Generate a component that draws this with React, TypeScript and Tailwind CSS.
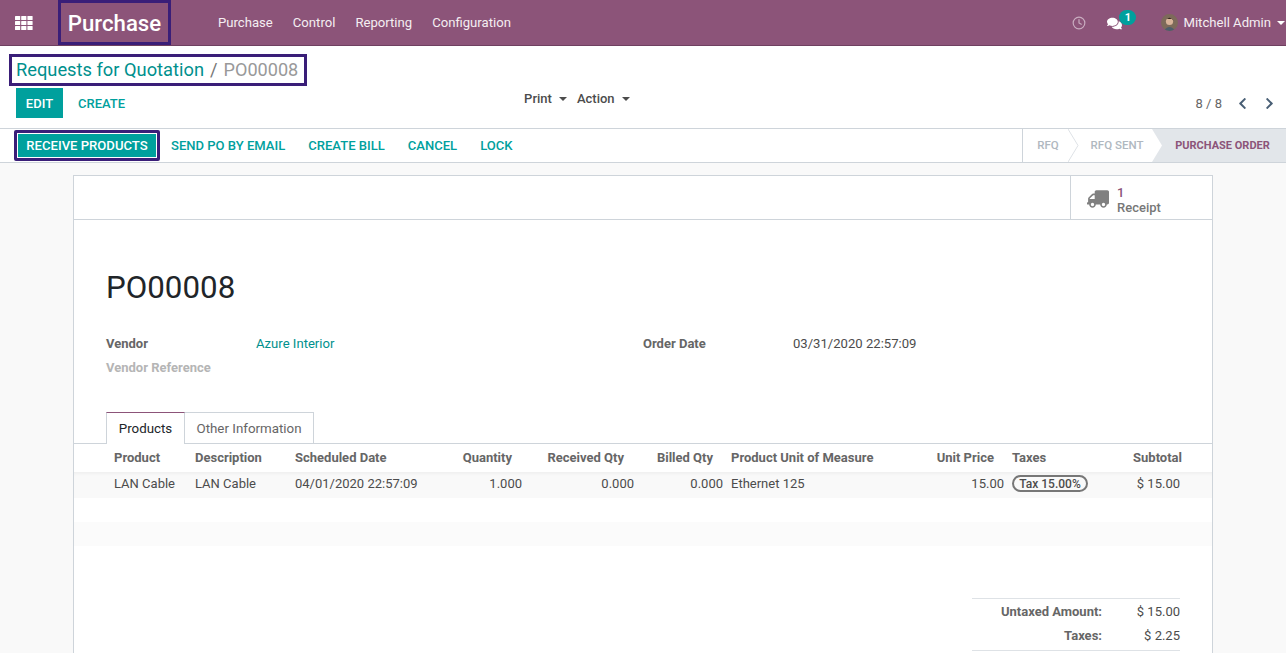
import { FaChevronLeft, FaChevronRight, FaComments, FaTruck } from "react-icons/fa";
import { Clock } from "lucide-react";

const headerCell = "font-bold text-[#666666] text-[13px] leading-none";
const bodyCell = "text-[#4c4c4c] text-[13px] leading-none pb-[4px]";

const MenuItems = ["Purchase", "Control", "Reporting", "Configuration"];
const ActionButtons = ["SEND PO BY EMAIL", "CREATE BILL", "CANCEL", "LOCK"];

const Caret = ({ color = "border-t-[#4c4c4c]", gap = "ml-[7px]" }: { color?: string; gap?: string }) => (
  <span className={`inline-block w-0 h-0 border-x-[4px] border-x-transparent border-t-[4px] align-middle ${gap} ${color}`} />
);

const AppsIcon = () => (
  <svg width="18" height="14" viewBox="0 0 18 14" fill="#fff">
    {[0, 5, 10].map((y) =>
      [0, 6.2, 12.4].map((x) => <rect key={`${x}-${y}`} x={x} y={y} width="5.2" height="4" rx="0.6" />)
    )}
  </svg>
);

const Avatar = () => (
  <svg width="17" height="17" viewBox="0 0 17 17" className="rounded-full">
    <rect width="17" height="17" fill="#7d6a5a" />
    <circle cx="8.5" cy="7.5" r="3.6" fill="#d9b49a" />
    <path d="M4.5 6.5 Q8.5 1 12.5 6.5 L11.5 5 L6 5Z" fill="#33241d" />
    <path d="M2.5 17 Q8.5 9 14.5 17Z" fill="#4d5d6b" />
  </svg>
);

const Navbar = () => (
  <div className="h-[46px] bg-[#8c5479] border-b border-[#6f4060] flex items-center text-white shrink-0">
    <div className="w-[58px] pl-[15px] flex items-center">
      <AppsIcon />
    </div>
    <div className="w-[113px] h-[45px] border-[3px] border-[#3a1e78] flex items-center justify-center text-[22.2px] font-medium leading-none pt-[1px]">
      Purchase
    </div>
    <div className="flex gap-5 ml-[47px] text-[13.13px] pt-[1px]">
      {MenuItems.map((m) => (
        <span key={m} className="text-[#f4eef2]">{m}</span>
      ))}
    </div>
    <div className="ml-auto flex items-center pr-[1px]">
      <Clock size={14} className="text-[#c9adc0] mr-[21px]" />
      <div className="relative mr-[39px] pt-[2px]">
        <FaComments size={15} className="text-white" />
        <span className="absolute -top-[4px] left-[12px] w-[17px] h-[15px] rounded-full bg-[#00a09d] text-[11px] leading-[15px] text-center font-bold">1</span>
      </div>
      <Avatar />
      <span className="ml-[5px] text-[13.13px] text-[#f4eef2] pt-[1px]">Mitchell Admin</span>
      <Caret color="border-t-white" gap="ml-[6px]" />
    </div>
  </div>
);

const ControlPanel = () => (
  <div className="h-[83px] bg-white border-b border-[#ced4da] pt-2 shrink-0">
    <div className="ml-[9px] w-[298px] h-[32px] border-[3px] border-[#3a1e78] flex items-center pl-1 text-[18.3px] leading-none">
      <span className="text-[#00908d]">Requests for Quotation</span>
      <span className="text-[#777777] ml-[6px] mr-[6px]">/</span>
      <span className="text-[#999999] text-[18.1px]">PO00008</span>
    </div>
    <div className="flex mt-[2px] pl-4">
      <div className="w-[47px] h-[30px] bg-[#00a09d] text-white text-[13px] font-medium flex items-center justify-center pt-[1px]">EDIT</div>
      <div className="ml-[15px] h-[30px] text-[#00a09d] text-[13px] font-medium flex items-center pt-[1px]">CREATE</div>
      <div className="ml-[399px] flex text-[13px] font-medium text-[#4c4c4c] h-[20px] items-center pt-[1px]">
        <span>Print<Caret /></span>
        <span className="ml-[10px]">Action<Caret /></span>
      </div>
      <div className="ml-auto flex items-center text-[#666666] text-[13px] pr-[10px] pt-[1px] h-[30px]">
        <span>8 / 8</span>
        <FaChevronLeft size={13} className="text-[#495f75] ml-[14px]" />
        <FaChevronRight size={13} className="text-[#495f75] ml-[14px]" />
      </div>
    </div>
  </div>
);

const Chevron = ({ fill, stroke }: { fill: string; stroke: string }) => (
  <svg width="11" height="33" viewBox="0 0 11 33" className="absolute -right-[11px] top-0 z-10">
    <path d="M0 0 L10 16.5 L0 33" fill={fill} stroke={stroke} />
  </svg>
);

const StatusBar = () => (
  <div className="h-[34px] bg-white border-b border-[#ced4da] flex items-center shrink-0">
    <div className="ml-[14px] w-[146px] h-[31px] border-[3px] border-[#3a1e78] rounded-[2px] p-[1px]">
      <div className="h-full bg-[#00a09d] text-white text-[13.1px] font-medium flex items-center justify-center">RECEIVE PRODUCTS</div>
    </div>
    <div className="flex gap-[23px] ml-[11px] text-[#00a09d] text-[13.05px] font-medium">
      {ActionButtons.map((b) => (
        <span key={b}>{b}</span>
      ))}
    </div>
    <div className="ml-auto flex h-full w-[264px] border-l border-[#ced4da] text-[11.5px] font-medium">
      <div className="relative w-[45px] flex items-center justify-center text-[#b0b8c0] pl-[5px] pt-[1px]">
        RFQ
        <Chevron fill="#ffffff" stroke="#dee2e6" />
      </div>
      <div className="relative w-[84px] flex items-center justify-center text-[#b0b8c0] pl-[14px] pt-[1px]">RFQ SENT</div>
      <div className="relative flex-1 bg-[#e2e6ea] flex items-center justify-center text-[#8c5479] text-[11px] font-bold pl-[7px] pt-[2px]">
        PURCHASE ORDER
        <svg width="10" height="33" viewBox="0 0 10 33" className="absolute left-0 top-0">
          <path d="M0 0 L10 16.5 L0 33Z" fill="#ffffff" />
        </svg>
      </div>
    </div>
  </div>
);

const Columns = "grid grid-cols-[81px_100px_135px_92px_112px_89px_177px_104px_96px_82px] pl-[40px] items-center";

const Sheet = () => (
  <div className="w-[1140px] ml-[73px] mt-[12px] bg-white border-x border-t border-[#ced4da] h-[481px]">
    <div className="h-[44px] border-b border-[#ced4da] flex justify-end">
      <div className="w-[142px] border-l border-[#ced4da] flex items-center pl-4">
        <FaTruck size={22} className="text-[#808080] -scale-x-100 mt-[2px]" />
        <div className="ml-[8px] text-[13px] leading-[15px] text-[#777777] font-medium pt-[5px]">
          <div className="text-[#8c5479]">1</div>
          <div>Receipt</div>
        </div>
      </div>
    </div>

    <div className="pl-8 pt-[50px] h-[192px]">
      <div className="text-[31.3px] leading-[36px] text-[#212529]">PO00008</div>
      <div className="grid grid-cols-[150px_387px_150px_1fr] mt-[26px] text-[13px] leading-[24px]">
        <span className="font-bold text-[#666666]">Vendor</span>
        <span className="text-[#00908d] text-[13.1px]">Azure Interior</span>
        <span className="font-bold text-[#666666]">Order Date</span>
        <span className="text-[#4c4c4c] text-[13.1px]">03/31/2020 22:57:09</span>
        <span className="font-bold text-[#b5b5b5]">Vendor Reference</span>
      </div>
    </div>

    <div className="h-[32px] border-b border-[#ced4da] flex pl-8 text-[13.33px]">
      <div className="w-[79px] h-[32px] bg-white border-x border-[#ced4da] border-t border-t-[#8c5479] flex items-center justify-center text-[#212529]">Products</div>
      <div className="w-[129px] h-[32px] border-r border-t border-[#ced4da] flex items-center justify-center text-[#666666]">Other Information</div>
    </div>

    <div className={`${Columns} h-[28px] pb-[1px]`}>
      <span className={headerCell}>Product</span>
      <span className={headerCell}>Description</span>
      <span className={headerCell}>Scheduled Date</span>
      <span className={`${headerCell} text-right pr-[10px]`}>Quantity</span>
      <span className={`${headerCell} text-right pr-[10px]`}>Received Qty</span>
      <span className={`${headerCell} text-right pr-[10px]`}>Billed Qty</span>
      <span className={`${headerCell} pl-2`}>Product Unit of Measure</span>
      <span className={`${headerCell} text-right pr-[10px]`}>Unit Price</span>
      <span className={`${headerCell} pl-[8px]`}>Taxes</span>
      <span className={`${headerCell} text-right`}>Subtotal</span>
    </div>
    <div className={`${Columns} h-[26px] bg-[#f9f9f9] shadow-[inset_0_4px_4px_-3px_rgba(0,0,0,0.06)]`}>
      <span className={bodyCell}>LAN Cable</span>
      <span className={bodyCell}>LAN Cable</span>
      <span className={bodyCell}>04/01/2020 22:57:09</span>
      <span className={`${bodyCell} text-right`}>1.000</span>
      <span className={`${bodyCell} text-right`}>0.000</span>
      <span className={`${bodyCell} text-right`}>0.000</span>
      <span className={`${bodyCell} pl-2`}>Ethernet 125</span>
      <span className={`${bodyCell} text-right`}>15.00</span>
      <span className="pl-[8px] flex pb-[3px]">
        <span className="w-[76px] h-[17px] rounded-full border-2 border-[#777777] text-[12px] font-medium text-[#4c4c4c] flex items-center justify-center leading-none">Tax 15.00%</span>
      </span>
      <span className={`${bodyCell} text-right pr-[2px]`}>$ 15.00</span>
    </div>
    <div className="h-[24px]" />
    <div className="h-[24px] bg-[#fbfbfb]" />

    <div className="w-[208px] ml-[898px] mt-[52px] border-y border-[#dee2e6] text-[13px] h-[53px] pt-[1px]">
      <div className="flex h-[24px] items-center">
        <span className="w-[130px] text-right font-bold text-[#666666]">Untaxed Amount:</span>
        <span className="flex-1 text-right text-[#4c4c4c]">$ 15.00</span>
      </div>
      <div className="flex h-[24px] items-center">
        <span className="w-[130px] text-right font-bold text-[#666666]">Taxes:</span>
        <span className="flex-1 text-right text-[#4c4c4c]">$ 2.25</span>
      </div>
    </div>
  </div>
);

export default function App() {
  return (
    <div className="h-[653px] overflow-hidden flex flex-col bg-[#f9f9f9] font-['Roboto',sans-serif]">
      <Navbar />
      <ControlPanel />
      <StatusBar />
      <Sheet />
    </div>
  );
}
